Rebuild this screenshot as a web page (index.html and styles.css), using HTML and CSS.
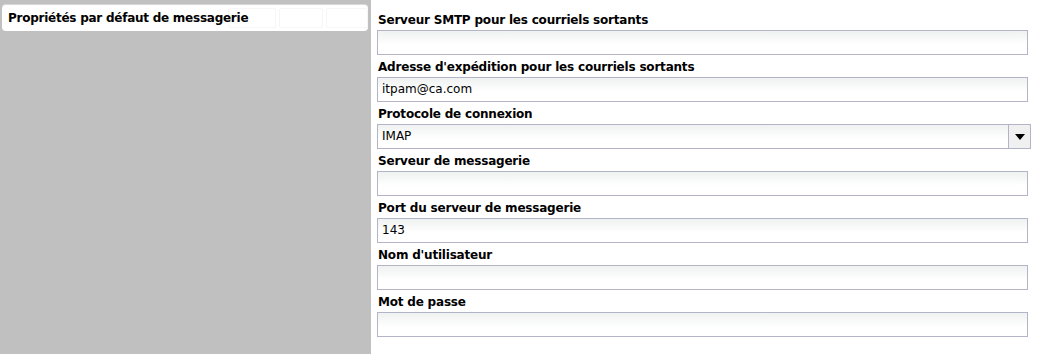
FILE: index.html
```html
<!DOCTYPE html>
<html lang="fr">
<head>
<meta charset="utf-8">
<title>Propriétés par défaut de messagerie</title>
<link rel="stylesheet" href="styles.css">
</head>
<body>
<div class="page">
  <aside class="side">
    <div class="side-head">
      <span class="side-title">Propriétés par défaut de messagerie</span>
      <span class="ghost ghost-a"></span>
      <span class="ghost ghost-b"></span>
      <span class="ghost ghost-c"></span>
    </div>
  </aside>
  <main class="form">
    <div class="field">
      <label class="lbl">Serveur SMTP pour les courriels sortants</label>
      <div class="inp"></div>
    </div>
    <div class="field">
      <label class="lbl">Adresse d'expédition pour les courriels sortants</label>
      <div class="inp">itpam@ca.com</div>
    </div>
    <div class="field">
      <label class="lbl">Protocole de connexion</label>
      <div class="sel">
        <span class="sel-val">IMAP</span>
        <span class="sel-btn"><svg width="10" height="6" viewBox="0 0 10 6"><path d="M0 0H10L5 6Z" fill="#000"/></svg></span>
      </div>
    </div>
    <div class="field">
      <label class="lbl">Serveur de messagerie</label>
      <div class="inp"></div>
    </div>
    <div class="field">
      <label class="lbl">Port du serveur de messagerie</label>
      <div class="inp">143</div>
    </div>
    <div class="field">
      <label class="lbl">Nom d'utilisateur</label>
      <div class="inp"></div>
    </div>
    <div class="field">
      <label class="lbl">Mot de passe</label>
      <div class="inp"></div>
    </div>
  </main>
</div>
</body>
</html>
```
FILE: styles.css
```css
html, body {
  margin: 0;
  padding: 0;
  background: #fff;
}
body {
  font-family: Tahoma, "DejaVu Sans", Verdana, sans-serif;
  color: #000;
}
.page {
  display: flex;
  width: 1040px;
  height: 354px;
}
.side {
  width: 371px;
  flex: none;
  background: #c0c0c0;
  padding: 4px 3px 0 2px;
  box-sizing: border-box;
}
.side-head {
  position: relative;
  height: 27px;
  background: #fff;
  border-radius: 4px;
  border-top: 1px solid #d8d8d8;
  box-sizing: border-box;
  display: flex;
  align-items: center;
  padding-left: 6px;
  padding-bottom: 1px;
}
.side-title {
  font-size: 12px;
  font-weight: bold;
  position: relative;
  z-index: 1;
  letter-spacing: -0.25px;
}
.ghost {
  position: absolute;
  top: 3px;
  bottom: 3px;
  border: 1px solid #f6f6f6;
  border-radius: 2px;
}
.ghost-a { left: 226px; width: 46px; }
.ghost-b { left: 277px; width: 42px; }
.ghost-c { left: 324px; width: 40px; }
.form {
  flex: 1;
  padding: 10px 0 0 6px;
  display: flex;
  flex-direction: column;
}
.field {
  display: flex;
  flex-direction: column;
  height: 47px;
}
.lbl {
  font-size: 12px;
  font-weight: bold;
  height: 20px;
  line-height: 16px;
  padding-top: 2px;
  box-sizing: border-box;
  letter-spacing: -0.2px;
  padding-left: 1px;
}
.inp {
  width: 651px;
  height: 25px;
  box-sizing: border-box;
  border: 1px solid #b4b4c8;
  background: linear-gradient(#eef2f0, #ffffff 60%);
  font-size: 12px;
  line-height: 23px;
  padding-left: 4px;
}
.sel {
  width: 654px;
  height: 25px;
  box-sizing: border-box;
  border: 1px solid #b4b4c8;
  background: linear-gradient(#eef2f0, #ffffff 60%);
  display: flex;
  font-size: 12px;
}
.sel-val {
  flex: 1;
  line-height: 23px;
  padding-left: 4px;
}
.sel-btn {
  width: 21px;
  border-left: 1px solid #b4b4c8;
  background: #f0f0f0;
  display: flex;
  align-items: center;
  justify-content: center;
}
.sel-btn svg { display: block; }
```
